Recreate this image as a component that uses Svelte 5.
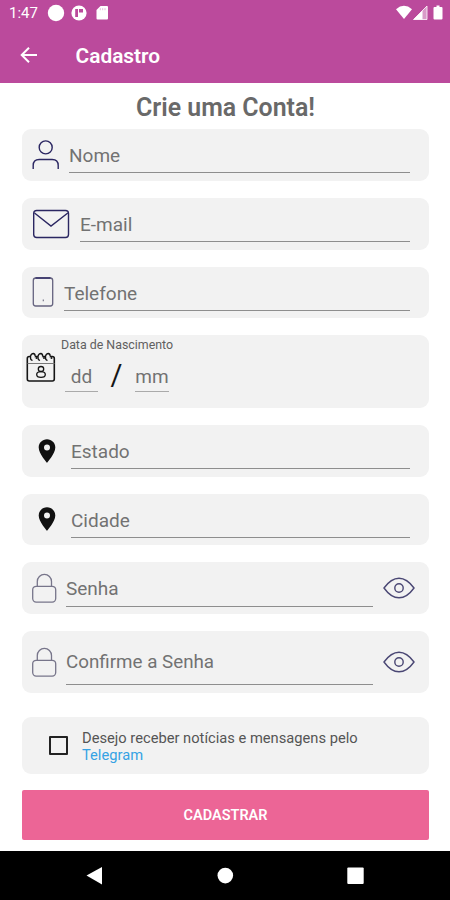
<script>
  let accepted = $state(false);
  let visible = $state({});

  const contact = [
    { name: "nome", label: "Nome", icon: "user", left: 47 },
    { name: "email", label: "E-mail", icon: "mail", left: 58 },
    { name: "telefone", label: "Telefone", icon: "phone", left: 42 },
  ];

  const place = [
    { name: "estado", label: "Estado", icon: "pin", left: 49 },
    { name: "cidade", label: "Cidade", icon: "pin", left: 49 },
  ];

  const secret = [
    { name: "senha", label: "Senha", icon: "lock", left: 44 },
    { name: "confirme", label: "Confirme a Senha", icon: "lock", left: 44, tall: true },
  ];

  function toggleVisible(name) {
    visible[name] = !visible[name];
  }
</script>

{#snippet icon(kind, width)}
  <svg class="icon" {width} height="52" viewBox="0 0 {width} 52" fill="none">
    {#if kind === "user"}
      <g stroke="#2b2762" stroke-width="1.4">
        <circle cx="23.7" cy="18.4" r="6.5" />
        <path d="M11.2 40v-3.5q0-6 6-6h13q6 0 6 6V40" />
      </g>
    {:else if kind === "mail"}
      <g stroke="#2b2762" stroke-width="1.4">
        <rect x="11.7" y="12.5" width="34.8" height="27" rx="3" />
        <path d="M12.5 15L29 28L45.8 15" />
      </g>
    {:else if kind === "phone"}
      <rect x="11.3" y="12" width="19.4" height="28" rx="2.5" stroke="#65637f" stroke-width="1.3" />
      <path d="M13.5 12h15" stroke="#2b2762" stroke-width="1.4" />
      <path d="M21.3 33.4v1.8" stroke="#77778a" stroke-width="1.2" />
    {:else if kind === "pin"}
      <path
        fill="#111"
        fill-rule="evenodd"
        d="M25 14.3c-4.7 0-8.3 3.6-8.3 8.2 0 6.1 8.3 15.3 8.3 15.3s8.3-9.2 8.3-15.3c0-4.6-3.6-8.2-8.3-8.2zm0 5.2a3 3 0 1 1 0 6 3 3 0 0 1 0-6z"
      />
    {:else if kind === "lock"}
      <g stroke="#77758a" stroke-width="1.3">
        <rect x="10.7" y="24.3" width="23" height="15.8" rx="3.5" />
        <path d="M15.3 24v-4.5a7.1 7.1 0 0 1 14.2 0V24" />
      </g>
    {/if}
  </svg>
{/snippet}

{#snippet field(item)}
  <div class="card field" class:tall={item.tall}>
    {@render icon(item.icon, item.left)}
    <div class="line" id={item.name}>{item.label}</div>
    {#if item.icon === "lock"}
      <button class="eye" aria-label="Mostrar senha" onclick={() => toggleVisible(item.name)}>
        <svg width="32" height="24" viewBox="0 0 32 24" fill="none" stroke="#4a4774" stroke-width="1.4">
          <path d="M1 12Q8 2.200 16 2.200T31 12Q24 21.800 16 21.800T1 12z" />
          <circle cx="16" cy="12" r="4.2" />
        </svg>
      </button>
    {/if}
  </div>
{/snippet}

<div class="screen">
  <header>
    <div class="status">
      <span class="clock">1:47</span>
      <svg width="62" height="18" viewBox="0 0 62 18" fill="#fff">
        <circle cx="9" cy="9" r="8.2" />
        <circle cx="32" cy="9" r="7.6" />
        <path d="M28.2 5h2.800v8h-2.800zM32 5h4v3.600h-4z" fill="#bb4a9c" />
        <path d="M53.500 2H60q1 0 1 1v11.500q0 1-1 1H50.500q-1 0-1-1V6z" />
        <path d="M53.300 4.200v2M55.700 4.200v2M58 4.200v2" stroke="#d68bc3" stroke-width=".6" />
      </svg>
      <svg class="signals" width="48" height="18" viewBox="0 0 48 18" fill="#fff">
        <path d="M0 5.200Q8 -1.500 16 5.200L8 15z" />
        <path d="M17.500 15.500L31 2v13.500z" opacity=".45" />
        <path d="M17.500 15.500L26.500 6.500v9z" />
        <path d="M17.500 15.500L31 2v13.500z" fill="none" stroke="#fff" stroke-width=".8" />
        <path d="M40.500 1.500h3v1.500h2q1 0 1 1v10.500q0 1-1 1h-7q-1 0-1-1V4q0-1 1-1h2z" />
      </svg>
    </div>
    <div class="toolbar">
      <button class="back" aria-label="Voltar">
        <svg width="18" height="18" viewBox="0 0 18 18" fill="none" stroke="#fff" stroke-width="2">
          <path d="M17 9H2M9 1.700L1.700 9l7.300 7.300" />
        </svg>
      </button>
      <span class="heading">Cadastro</span>
    </div>
  </header>

  <main>
    <h1><span>Crie uma Conta!</span></h1>

    {#each contact as item}
      {@render field(item)}
    {/each}

    <div class="card birth">
      <svg class="calendar" width="30" height="31" viewBox="0 0 30 31" fill="none" stroke="#151515" stroke-width="1.6">
        <rect x="1.3" y="4.5" width="27" height="24.5" rx="2" />
        <path d="M1.5 11.500h27" stroke="#777" stroke-width="1" />
        <!-- binder rings -->
        <g fill="#f2f2f2" stroke-width="1.3">
          <path d="M6.500 8.500q-2.500-1-2-4t3-3q2 .5 1.500 3" />
          <path d="M14 8.500q-2.500-1-2-4t3-3q2 .5 1.500 3" />
          <path d="M21.500 8.500q-2.500-1-2-4t3-3q2 .5 1.500 3" />
        </g>
        <g fill="#151515" stroke="none">
          <circle cx="10.500" cy="6" r="1" />
          <circle cx="18" cy="6" r="1" />
          <circle cx="25.500" cy="6" r="1" />
        </g>
        <ellipse cx="15" cy="17" rx="2.700" ry="2.500" stroke-width="1.3" />
        <ellipse cx="15" cy="22.500" rx="4.300" ry="2.900" stroke-width="1.3" />
      </svg>
      <div class="birth-body">
        <span class="caption">Data de Nascimento</span>
        <div class="date">
          <span class="part day">dd</span>
          <span class="slash">/</span>
          <span class="part month">mm</span>
        </div>
      </div>
    </div>

    {#each place as item}
      {@render field(item)}
    {/each}

    {#each secret as item}
      {@render field(item)}
    {/each}

    <div class="card news">
      <button
        class="check"
        class:checked={accepted}
        role="checkbox"
        aria-checked={accepted}
        aria-label="Receber mensagens"
        onclick={() => (accepted = !accepted)}
      ></button>
      <p>
        <span>Desejo receber notícias e mensagens pelo</span><br />
        <span class="link">Telegram</span>
      </p>
    </div>

    <button class="submit">CADASTRAR</button>
  </main>

  <nav>
    <svg width="450" height="49" viewBox="0 0 450 49" fill="#fff">
      <path d="M86.500 24.500L102 16v17.500z" />
      <circle cx="225.300" cy="24.600" r="7.800" />
      <rect x="347.300" y="16.500" width="16.400" height="16.500" rx="1" />
    </svg>
  </nav>
</div>

<style>
  :global(body) {
    margin: 0;
    background: #fff;
  }

  .screen {
    width: 450px;
    height: 900px;
    display: flex;
    flex-direction: column;
    overflow: hidden;
    font-family: Roboto, "Liberation Sans", sans-serif;
    color: #727272;
  }

  button {
    font-family: inherit;
    border: 0;
    padding: 0;
    background: none;
    cursor: pointer;
  }

  svg {
    display: block;
    flex: none;
  }

  header {
    height: 83px;
    flex: none;
    background: #bb4a9c;
    color: #fff;
  }

  .status {
    display: flex;
    align-items: center;
    height: 18px;
    padding: 4px 4px 5px 9px;
  }

  .clock {
    width: 38px;
    font-size: 15px;
    line-height: 19px;
  }

  .signals {
    margin-left: auto;
    margin-right: 2px;
  }

  .toolbar {
    display: flex;
    align-items: center;
    height: 56px;
    padding-left: 20px;
  }

  .heading {
    margin-left: 37.5px;
    font-size: 20.9px;
    font-weight: 600;
    line-height: 28px;
    padding-top: 2px;
  }

  main {
    flex: 1;
    display: flex;
    flex-direction: column;
    padding: 0 21px 0 22px;
  }

  h1 {
    margin: 0;
    height: 46.3px;
    font-size: 24.9px;
    font-weight: 600;
    line-height: 49px;
    text-align: center;
    white-space: nowrap;
    color: #696969;
  }

  .card {
    flex: none;
    box-sizing: border-box;
    background: #f2f2f2;
    border-radius: 9px;
    margin-bottom: 17.1px;
  }

  .field {
    display: flex;
    align-items: center;
    height: 51.6px;
    padding-right: 19px;
  }

  .line {
    flex: 1;
    align-self: stretch;
    box-sizing: border-box;
    height: 44.2px;
    border-bottom: 1px solid #8e8e8e;
    font-size: 19px;
    line-height: 54px;
    white-space: nowrap;
  }

  .tall {
    height: 62px;
    margin-bottom: 23.5px;
  }

  .tall .line {
    height: 54px;
    line-height: 63px;
    font-size: 18.8px;
  }

  .eye {
    margin: 0 -5px 0 10px;
  }

  .birth {
    display: flex;
    height: 72.5px;
    padding: 0 0 0 4px;
  }

  .calendar {
    margin-top: 16.5px;
  }

  .birth-body {
    padding: 3px 0 0 5px;
  }

  .caption {
    display: block;
    font-size: 12.4px;
    line-height: 13px;
    color: #606060;
  }

  .date {
    display: flex;
    padding: 11px 0 0 4px;
  }

  .part {
    border-bottom: 1px solid #aaa;
    font-size: 19px;
    line-height: 29px;
    height: 28.4px;
    text-align: center;
  }

  .day {
    width: 33px;
  }

  .month {
    width: 34px;
  }

  .slash {
    width: 37px;
    text-align: center;
    font-size: 29px;
    line-height: 27px;
    color: #151515;
  }

  .news {
    display: flex;
    align-items: center;
    height: 57px;
    margin-bottom: 16px;
    padding-left: 27px;
  }

  .check {
    box-sizing: border-box;
    width: 19px;
    height: 19px;
    border: 2px solid #222;
    border-radius: 1px;
  }

  .checked {
    background: #bb4a9c;
  }

  .news p {
    margin: 0 0 0 14px;
    padding-top: 3px;
    font-size: 14.7px;
    line-height: 17px;
    color: #555;
    white-space: nowrap;
  }

  .news .link {
    color: #35a2e4;
  }

  .submit {
    flex: none;
    height: 50px;
    padding-top: 2px;
    background: #ec6596;
    color: #fff;
    font-size: 14.5px;
    font-weight: 600;
    border-radius: 2px;
  }

  nav {
    flex: none;
    height: 49px;
    background: #000;
  }
</style>
